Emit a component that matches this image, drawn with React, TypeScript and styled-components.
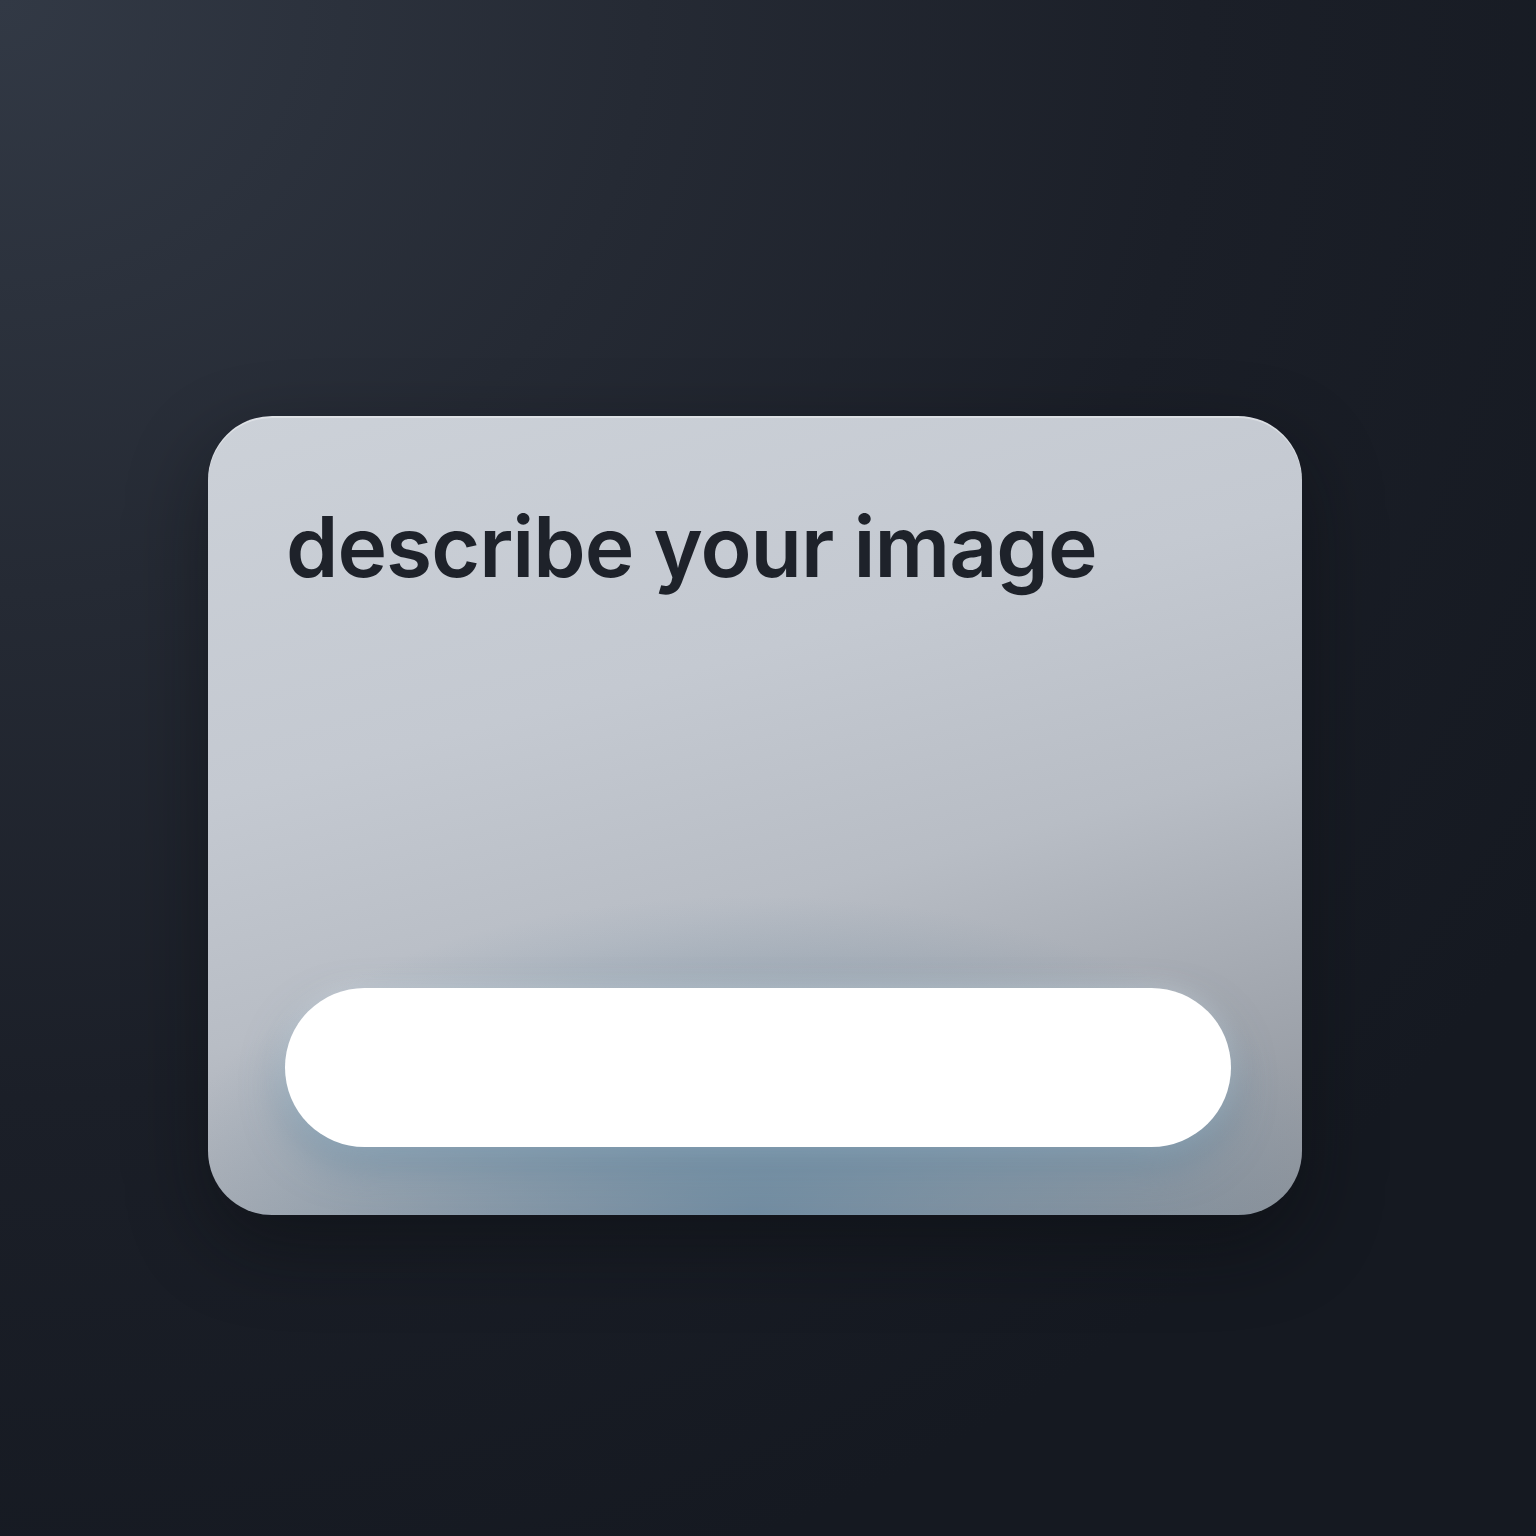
import React from 'react';
import styled, { createGlobalStyle } from 'styled-components';

const GlobalStyle = createGlobalStyle`
  html, body {
    margin: 0;
    padding: 0;
  }
  body {
    font-family: Inter, 'Noto Sans', 'Liberation Sans', sans-serif;
  }
`;

const App: React.FC = () => {
  return (
    <Page>
      <GlobalStyle />
      <Card>
        <Heading>describe your image</Heading>
        <PromptInput aria-label="prompt" />
      </Card>
    </Page>
  );
};

const Page = styled.div`
  width: 1536px;
  height: 1536px;
  box-sizing: border-box;
  padding: 416px 0 0 208px;
  background: radial-gradient(
      ellipse 120% 110% at 0% 0%,
      #323945 0%,
      #252a34 35%,
      #1b1f28 65%,
      #151921 100%
    );
  overflow: hidden;
`;

const Card = styled.div`
  width: 1094px;
  height: 799px;
  box-sizing: border-box;
  padding: 89px 71px 68px 78px;
  border-radius: 64px;
  display: flex;
  flex-direction: column;
  justify-content: space-between;
  background:
    radial-gradient(ellipse 55% 40% at 50% 100%, rgba(104, 136, 160, 0.8) 0%, rgba(104, 136, 160, 0) 100%),
    linear-gradient(165deg, #ccd1d8 0%, #c4c9d1 35%, #b8bdc5 58%, #a1a6ae 80%, #8c929a 100%);
  box-shadow:
    inset 0 2px 0 rgba(255, 255, 255, 0.35),
    0 30px 80px rgba(8, 10, 14, 0.45);
`;

const Heading = styled.h1`
  margin: 0;
  font-family: Inter, 'Noto Sans', 'Liberation Sans', sans-serif;
  font-size: 84px;
  font-weight: 600;
  line-height: 1;
  letter-spacing: -1px;
  color: #1e222a;
`;

const PromptInput = styled.div`
  height: 159px;
  margin-left: -1px;
  border-radius: 80px;
  background: #ffffff;
  box-shadow:
    0 18px 40px rgba(96, 134, 160, 0.55),
    0 0 24px rgba(255, 255, 255, 0.35);
`;

export default App;
